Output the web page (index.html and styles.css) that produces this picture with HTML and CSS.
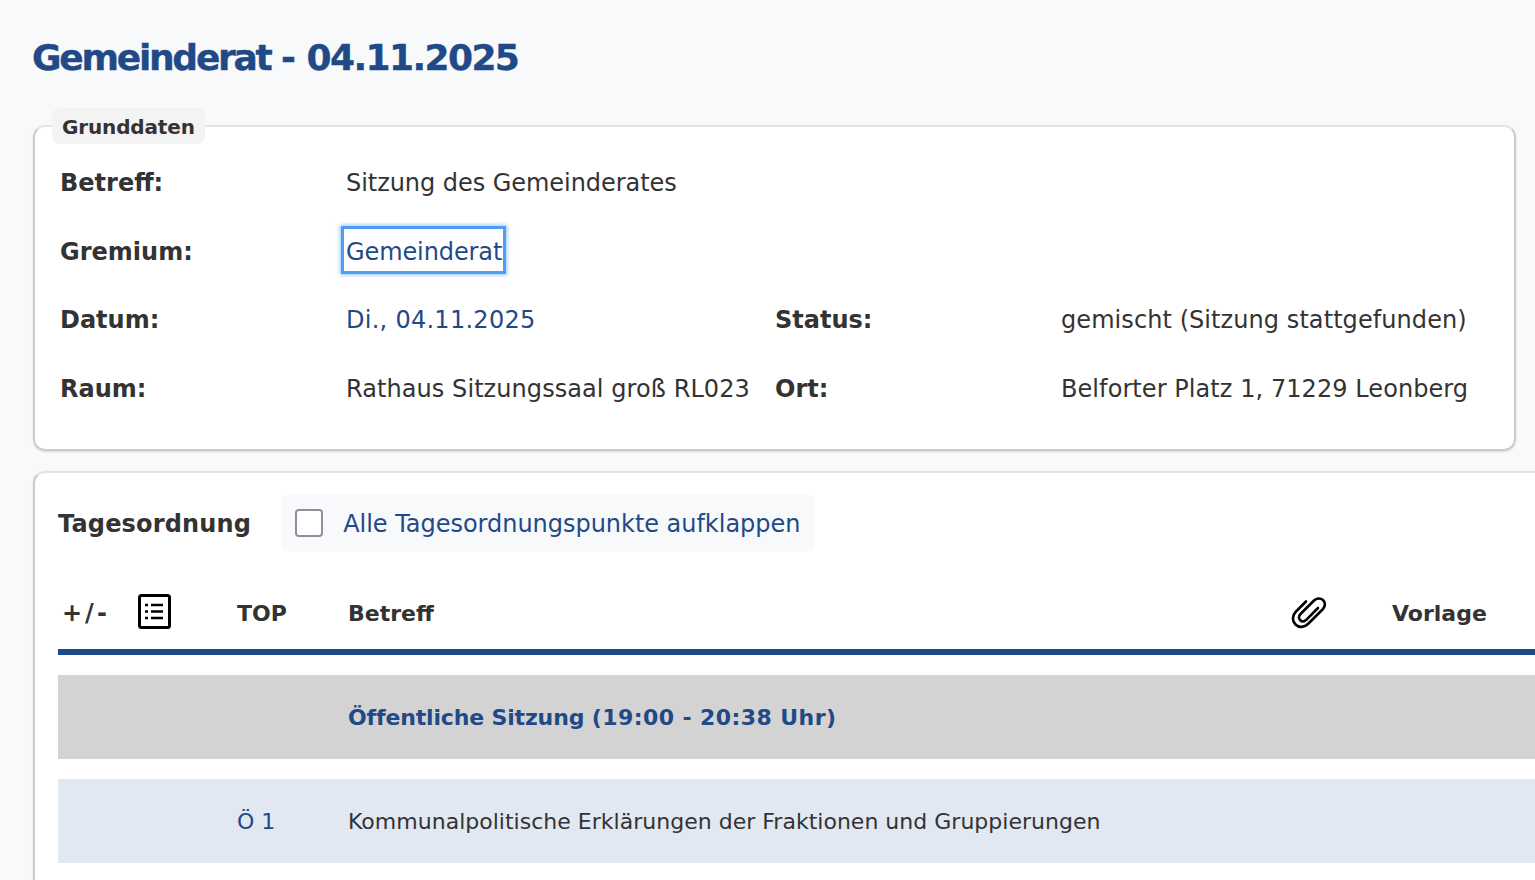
FILE: index.html
```html
<!DOCTYPE html>
<html lang="de">
<head>
    <meta charset="UTF-8">
    <meta name="viewport" content="width=device-width, initial-scale=1">
    <title>Gemeinderat - 04.11.2025</title>
    <link rel="stylesheet" href="styles.css">
</head>
<body>
    <h1><span class="title-name">Gemeinderat</span> - <span class="title-date">04.11.2025</span></h1>

    <fieldset class="card basics">
        <legend>Grunddaten</legend>
        <div class="facts">
            <div class="label">Betreff:</div>
            <div class="value wide">Sitzung des Gemeinderates</div>

            <div class="label">Gremium:</div>
            <div class="value wide"><a href="#" class="focused">Gemeinderat</a></div>

            <div class="label">Datum:</div>
            <div class="value"><a href="#" class="date">Di., 04.11.2025</a></div>
            <div class="label">Status:</div>
            <div class="value">gemischt (Sitzung stattgefunden)</div>

            <div class="label">Raum:</div>
            <div class="value">Rathaus Sitzungssaal groß RL023</div>
            <div class="label">Ort:</div>
            <div class="value">Belforter Platz 1, 71229 Leonberg</div>
        </div>
    </fieldset>

    <section class="card agenda">
        <div class="agenda-head">
            <h2>Tagesordnung</h2>
            <label class="expand">
                <input type="checkbox">
                <span>Alle Tagesordnungspunkte aufklappen</span>
            </label>
        </div>

        <table>
            <colgroup>
                <col class="c-toggle"><col class="c-list"><col class="c-top"><col class="c-subject"><col class="c-clip"><col class="c-doc">
            </colgroup>
            <thead>
                <tr>
                    <th class="plusminus">+/-</th>
                    <th>
                        <svg class="icon icon-list" width="33" height="35" viewBox="0 0 33 35" fill="none" stroke="#000">
                            <rect x="1.500" y="1.500" width="30" height="32" rx="2" stroke-width="3"/>
                            <path d="M13 11h12M13 17.500h12M13 24h12" stroke-width="2.500"/>
                            <path d="M7 11h3M7 17.500h3M7 24h3" stroke-width="2.500"/>
                        </svg>
                    </th>
                    <th>TOP</th>
                    <th>Betreff</th>
                    <th>
                        <svg class="icon" width="36" height="33" viewBox="0 0 36 33" fill="none" stroke="#000" stroke-width="2.600" stroke-linecap="round">
                            <path d="M15 4.500 5 14.500C1 18.500 1 24 4.500 27.500 8 31 13.500 30.500 17 27L32 12C34.500 9.500 34.500 5 32 3 29.500.8 25.500 1 23 3.500L9.500 17C7.500 19 7.500 21.800 9.200 23.300 11 25 13.500 24.500 15.300 22.800L27 11"/>
                        </svg>
                    </th>
                    <th>Vorlage</th>
                </tr>
            </thead>
            <tbody>
                <tr class="section">
                    <td colspan="3"></td>
                    <td colspan="3">Öffentliche Sitzung <span class="time">(19:00 - 20:38 Uhr)</span></td>
                </tr>
                <tr class="item">
                    <td></td>
                    <td></td>
                    <td><a href="#">Ö 1</a></td>
                    <td colspan="3">Kommunalpolitische Erklärungen der Fraktionen und Gruppierungen</td>
                </tr>
            </tbody>
        </table>
    </section>
</body>
</html>
```

FILE: styles.css
```css
html { overflow: hidden; }
body { font-family: "DejaVu Sans", sans-serif; margin: 0; padding: 0 19px 0 33px; background: #f8f9fb; color: #333; font-size: 24px; }
a { color: #1f4a87; text-decoration: none; }

h1 { margin: 0 0 0 -1px; padding-top: 33px; font-size: 36px; line-height: 50px; color: #1f4a87; -webkit-text-stroke: .4px #1f4a87; word-spacing: -2px; }
.title-name { letter-spacing: -2.25px; }
.title-date { letter-spacing: -1.6px; }

.card { background: #fff; border: 2px solid #ccc; border-top-color: #e4e4e4; border-radius: 12px; box-shadow: 0 1px 2px #0002; box-sizing: border-box; }

.basics { margin: 25px 0 0; padding: 5px 25px 26px; min-width: 0; }
legend { margin-left: -8px; padding: 2px 10px 0; background: #f3f3f3; border-radius: 8px; font-size: 20px; font-weight: bold; line-height: 34px; letter-spacing: -.15px; }

.facts { display: grid; grid-template-columns: 286px 429px 286px 1fr; grid-auto-rows: 68.5px; align-items: center; }
.label { font-weight: bold; }
.value { letter-spacing: .07px; }
.wide { grid-column: 2 / 5; letter-spacing: -.05px; }
.date { letter-spacing: .27px; }
.focused { display: inline-block; margin: -3px 0 0 -2px; padding: 5px 1px 0 2px; line-height: 37px; letter-spacing: -.1px; outline: 3px solid #4d9df5; box-shadow: 0 0 4px 4px #4d9df599; }

.agenda { width: 1600px; margin-top: 20px; padding: 21px 24px 20px 23px; border-right: 0; }
.agenda-head { display: flex; align-items: center; gap: 30px; }
h2 { margin: 0; padding-top: 2px; font-size: 24px; letter-spacing: .17px; }
.expand { display: flex; align-items: center; gap: 20px; height: 58px; padding: 0 15px 0 14px; background: #f8f9fb; border-radius: 8px; color: #1f4a87; letter-spacing: -.03px; }
.expand span { padding-top: 2px; }
.expand input { appearance: none; width: 28px; height: 28px; margin: 0; background: #fff; border: 2px solid #8f8f9d; border-radius: 4px; }

table { width: 1493px; margin-top: 3px; table-layout: fixed; border-collapse: separate; border-spacing: 0 20px; font-size: 22px; }
.c-toggle { width: 75px; }
.c-list { width: 99px; }
.c-top { width: 111px; }
.c-clip { width: 101px; }
.c-doc { width: 164px; }
th, td { padding: 0 5px; text-align: left; }
th { height: 72px; padding-top: 2px; border-bottom: 6px solid #1f4a87; }
.icon { display: block; }
.icon-list { margin-top: -3px; }
.plusminus { padding-left: 4px; font-size: 24px; letter-spacing: 3px; }
.section td { height: 84px; background: #d3d3d3; color: #1f4a87; font-weight: bold; letter-spacing: -.15px; }
.time { letter-spacing: .42px; }
.item td { height: 84px; background: #e1e8f2; letter-spacing: .015px; }
```
